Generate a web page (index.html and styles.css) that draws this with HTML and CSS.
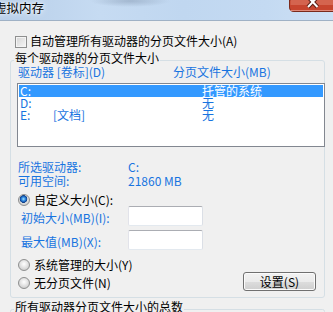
FILE: index.html
```html
<!DOCTYPE html>
<html lang="zh-CN">
<head>
<meta charset="utf-8">
<title>虚拟内存</title>
<link rel="stylesheet" href="styles.css">
</head>
<body>
<header class="caption">
  <span class="caption-text">虚拟内存</span>
  <svg class="caption-close" width="50" height="12" viewBox="0 0 50 12">
    <path d="M0.5 0 V7 Q0.5 11.5 5 11.5 H50 V0 Z" fill="#c7452f" stroke="#7b2a1c" stroke-width="1"/>
    <rect x="1.5" y="0" width="48.5" height="5" fill="#d4644f"/>
    <path d="M1.5 10.5 H50" stroke="#e08a7a" stroke-width="1"/>
    <path d="M19 -3 L28.5 7 M28.5 -3 L19 7" stroke="#5b1e14" stroke-width="4" fill="none"/>
    <path d="M19 -3 L28.5 7 M28.5 -3 L19 7" stroke="#ffffff" stroke-width="2" fill="none"/>
  </svg>
</header>

<label class="check-row">
  <span class="checkbox"></span>
  <span>自动管理所有驱动器的分页文件大小(A)</span>
</label>

<div class="group g1">
  <div class="legend">每个驱动器的分页文件大小</div>
  <div class="cols">
    <span class="col-drive">驱动器 [卷标](D)</span>
    <span>分页文件大小(MB)</span>
  </div>
  <div class="list">
    <div class="row sel"><span>C:</span><span></span><span>托管的系统</span></div>
    <div class="row"><span>D:</span><span></span><span>无</span></div>
    <div class="row"><span>E:</span><span>[文档]</span><span>无</span></div>
  </div>
  <div class="info">
    <span>所选驱动器:</span><span>C:</span>
    <span>可用空间:</span><span>21860 MB</span>
  </div>
  <div class="radio-row first">
    <span class="radio on"></span><span>自定义大小(C):</span>
  </div>
  <div class="field">
    <span class="field-label">初始大小(MB)(I):</span>
    <input class="input" type="text">
  </div>
  <div class="field second">
    <span class="field-label">最大值(MB)(X):</span>
    <input class="input" type="text">
  </div>
  <div class="radio-row sys">
    <span class="radio"></span><span>系统管理的大小(Y)</span>
  </div>
  <div class="bottom-row">
    <div class="radio-row none">
      <span class="radio"></span><span>无分页文件(N)</span>
    </div>
    <button class="btn" type="button">设置(S)</button>
  </div>
</div>

<div class="group g2">
  <div class="legend">所有驱动器分页文件大小的总数</div>
</div>
</body>
</html>
```

FILE: styles.css
```css
* { box-sizing: border-box; }

html, body { margin: 0; padding: 0; }

body {
  width: 333px;
  height: 312px;
  overflow: hidden;
  background: #f0f0f0;
  font-family: "Noto Sans CJK SC", "Noto Sans", sans-serif;
  font-size: 12px;
  line-height: 12px;
  color: #000;
}

/* Window caption */
.caption {
  display: flex;
  justify-content: space-between;
  align-items: flex-start;
  width: 333px;
  height: 21px;
  overflow: hidden;
  background-color: #c2d8f1;
  background-image:
    radial-gradient(ellipse 40px 6px at 130px 1px, rgba(130,150,175,0.5), rgba(130,150,175,0)),
    linear-gradient(to right, #b8cfe9 0%, #c6dbf2 30%, #c0d7f0 55%, #c4daf2 80%, #cde0f5 100%);
  border-bottom: 1px solid #9fb1c5;
}

.caption-text {
  margin-left: -6px;
  padding-top: 2px;
  line-height: 12px;
  font-size: 12.5px;
  text-shadow: 0 0 6px rgba(255,255,255,0.95), 0 0 3px rgba(255,255,255,0.9);
}

.caption-close {
  display: block;
  flex: 0 0 auto;
  margin-right: -6px;
}

/* Checkbox */
.check-row {
  display: flex;
  gap: 3px;
  margin: 14px 0 0 15px;
  line-height: 12px;
}

.checkbox {
  width: 12px;
  height: 12px;
  margin-top: 1px;
  border: 1px solid #8e8f8f;
  background: linear-gradient(135deg, #d4d4d4, #f7f7f7);
  box-shadow: inset 0 0 0 1px #f4f4f4;
}

/* Group boxes */
.group {
  width: 315px;
  margin-left: 10px;
  border: 1px solid #d5dfe5;
  border-radius: 3px;
  display: flex;
  flex-direction: column;
}

.g1 {
  margin-top: 12px;
  padding-bottom: 6px;
}

.g2 {
  margin-top: 11px;
}

.legend {
  align-self: flex-start;
  margin: -9px 0 0 3px;
  padding: 0 1px;
  background: #f0f0f0;
  line-height: 12px;
}

.cols {
  display: flex;
  margin: 2px 0 0 7px;
  color: #1874e0;
}

.col-drive { width: 155px; }

/* List */
.list {
  margin: 5px -1px 0 6px;
  height: 64px;
  border: 1px solid #828790;
  background: #fff;
  padding: 1px;
}

.row {
  display: grid;
  grid-template-columns: 33px 149px 1fr;
  height: 12px;
  line-height: 12px;
  padding-left: 1px;
  color: #1874e0;
}

.row.sel {
  background: #3399ff;
  color: #fff;
}

/* Info */
.info {
  display: grid;
  grid-template-columns: 110px auto;
  margin: 13px 0 0 7px;
  line-height: 14px;
  color: #1874e0;
}

/* Radios */
.radio-row {
  display: flex;
  gap: 4px;
  margin-left: 7px;
  line-height: 12px;
}

.radio-row.first { margin-top: 6px; }
.radio-row.sys { margin-top: 9px; }
.radio-row.none { margin: 5px 0 0 0; }

.radio {
  width: 12px;
  height: 12px;
  border-radius: 50%;
  border: 1px solid #8e8f8f;
  background: radial-gradient(circle at 50% 40%, #ffffff 0, #e8e8e8 3px, #cfcfcf 6px);
}

.radio.on {
  background:
    radial-gradient(circle at 45% 40%, #a8e4ff 0, #3b95e4 1.6px, #1556b0 3px, #0c3b80 3.6px, transparent 4.1px),
    radial-gradient(circle at 50% 40%, #ffffff 0, #e8e8e8 3px, #cfcfcf 6px);
}

/* Fields */
.field {
  display: flex;
  align-items: flex-start;
  padding-left: 10px;
}

.field.second { margin-top: 4px; }

.field-label {
  width: 107px;
  margin-top: 6px;
  color: #1874e0;
}

.input {
  width: 75px;
  height: 20px;
  margin: 0;
  padding: 0;
  border: 1px solid;
  border-color: #abadb3 #dbdfe6 #e3e9ef #e2e3ea;
  border-radius: 2px;
  background: #fff;
  font: inherit;
}

/* Bottom row */
.bottom-row {
  display: flex;
  justify-content: space-between;
  align-items: flex-start;
  margin: 1px 8px 0 7px;
}

.bottom-row .radio-row { margin-left: 0; }

.btn {
  width: 73px;
  height: 19px;
  margin: 0;
  padding: 0;
  border: 1px solid #707070;
  border-radius: 3px;
  background: linear-gradient(#f2f2f2 0%, #ebebeb 50%, #dddddd 50%, #cfcfcf 100%);
  box-shadow: inset 0 0 0 1px #fbfbfb;
  font: inherit;
  line-height: 17px;
  color: #000;
  text-align: center;
}
```
